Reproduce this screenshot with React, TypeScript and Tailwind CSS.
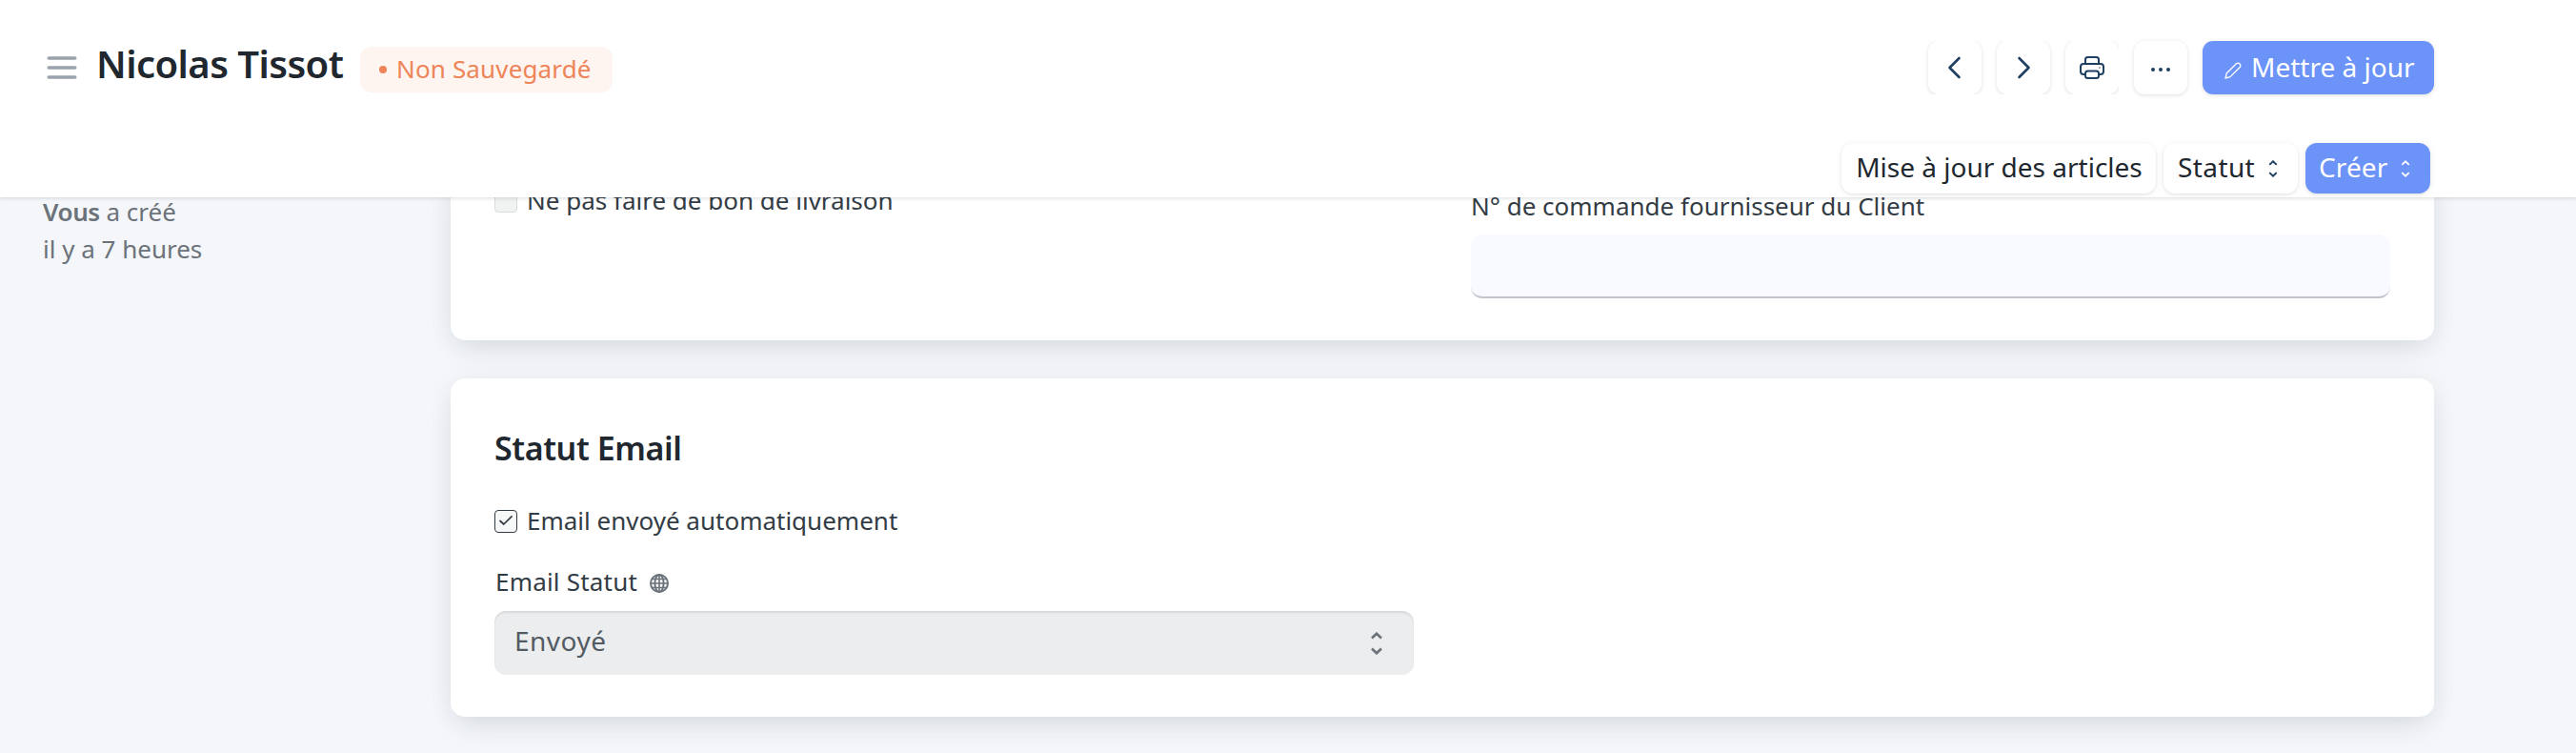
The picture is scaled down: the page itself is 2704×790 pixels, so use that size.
import type { ReactNode } from 'react';

const buttonShadow = 'shadow-[0_1px_3px_rgba(25,39,52,0.10),0_1px_8px_rgba(25,39,52,0.05)]';
const cardShadow = 'shadow-[0_14px_32px_-8px_rgba(25,45,50,0.11),0_2px_28px_rgba(25,39,60,0.055)]';

function UpDown({ className }: { className: string }) {
  return (
    <svg viewBox="0 0 12 24" fill="none" stroke="currentColor" className={className}>
      <path d="M1 6.5 6 1.7 11 6.5M1 17.5 6 22.3 11 17.5" />
    </svg>
  );
}

function IconButton({ children }: { children: ReactNode }) {
  return (
    <button className={`flex size-14 items-center justify-center rounded-[11px] bg-white text-[#1f3f63] ${buttonShadow}`}>
      {children}
    </button>
  );
}

function Header() {
  return (
    <header className="relative z-10 flex h-[207px] justify-between bg-white pr-[149px] pl-[49px] shadow-[0_1px_4px_rgba(25,39,52,0.16)]">
      <div className="flex h-[142px] items-center">
        <svg viewBox="0 0 32 24" className="h-6 w-8" stroke="#9aa3ad" strokeWidth="3.6" strokeLinecap="round">
          <path d="M2.3 2h27.4M2.3 12h27.4M2.3 22h27.4" />
        </svg>
        <h1 className="ml-[20px] w-[277px] pb-2 text-[40px] leading-[56px] font-semibold tracking-[-0.55px] whitespace-nowrap text-[#20272e]">Nicolas Tissot</h1>
        <div className="mt-1 flex h-12 w-[265px] items-center rounded-[12px] bg-[#fef4f0] pl-5 text-[#ed8558]">
          <span className="mr-[10px] size-2 rounded-full bg-[#ed8558]" />
          <span className="pb-0.5 text-[26px] leading-9 tracking-[0.15px] whitespace-nowrap">Non Sauvegardé</span>
        </div>
      </div>

      <div className="flex flex-col items-end">
        <div className="mt-[43px] flex h-14 gap-4">
          <div className="flex gap-4 [clip-path:inset(0_0_0_-8px)]">
            <IconButton>
              <svg viewBox="0 0 24 24" className="size-6" fill="none" stroke="currentColor" strokeWidth="2.6" strokeLinecap="round" strokeLinejoin="round"><path d="M16.500 2 6.500 12 16.500 22" /></svg>
            </IconButton>
            <IconButton>
              <svg viewBox="0 0 24 24" className="size-6" fill="none" stroke="currentColor" strokeWidth="2.6" strokeLinecap="round" strokeLinejoin="round"><path d="M7.500 2 17.500 12 7.500 22" /></svg>
            </IconButton>
            <IconButton>
              <svg viewBox="0 0 26 24" className="h-6 w-[26px]" fill="none" stroke="currentColor" strokeWidth="2" strokeLinejoin="round">
                <path d="M6 8V3.5Q6 1 8.500 1h9Q20 1 20 3.500V8M6 19H4Q1 19 1 16v-5Q1 8 4 8h18q3 0 3 3v5q0 3-3 3h-2" />
                <rect x="6" y="15.500" width="14" height="7.500" rx="2.500" />
                <path d="M20 12h1.800" strokeWidth="1.500" opacity=".6" />
              </svg>
            </IconButton>
          </div>
          <IconButton>
            <svg viewBox="0 0 22 6" className="mt-1 h-1.5 w-[22px]" fill="currentColor"><circle cx="3" cy="3" r="2" /><circle cx="11" cy="3" r="2" /><circle cx="19" cy="3" r="2" /></svg>
          </IconButton>
          <button className={`flex w-[243px] items-center rounded-[11px] bg-[#6c93f8] pl-[23px] text-white ${buttonShadow}`}>
            <svg viewBox="0 0 18 18" className="mt-1.5 mr-[10px] size-[18px]" fill="none" stroke="currentColor" strokeWidth="1.300" strokeLinejoin="round">
              <path d="M1 17 2.300 11.800 12.500 1.800Q14.200.400 16 2 17.500 3.800 16.200 5.500L6 15.600Z" />
            </svg>
            <span className="pb-0.5 text-[28px] leading-9 whitespace-nowrap">Mettre à jour</span>
          </button>
        </div>

        <div className="mt-[51px] mr-1 flex h-[53px] gap-2 text-[28px] leading-9 text-[#20272e]">
          <button className={`w-[330px] rounded-[12px] bg-white pb-1 pl-px whitespace-nowrap ${buttonShadow}`}>Mise à jour des articles</button>
          <button className={`flex w-[141px] items-center rounded-[12px] bg-white pl-[15px] ${buttonShadow}`}>
            <span className="w-[95px] pb-1 text-left tracking-[0.4px]">Statut</span>
            <UpDown className="h-[18px] w-[10px] stroke-[2.6] text-[#1f3f63]" />
          </button>
          <button className={`flex w-[131px] items-center rounded-[12px] bg-[#6c93f8] pl-[14px] text-white ${buttonShadow}`}>
            <span className="w-[86px] pb-1 text-left tracking-[0.1px]">Créer</span>
            <UpDown className="h-[18px] w-[10px] stroke-[2.4]" />
          </button>
        </div>
      </div>
    </header>
  );
}

export default function App() {
  return (
    <div className="h-[790px] overflow-hidden bg-[#f4f6fa] font-['Noto_Sans',sans-serif] text-[26px] leading-10 text-[#333c44]">
      <Header />
      <div className="-mt-[30px] flex">
        <aside className="w-[473px] pt-[26px] pl-[45px] leading-[39px] text-[#6b7279]">
          <p><span className="font-semibold tracking-[-0.4px]">Vous</span> a créé</p>
          <p>il y a 7 heures</p>
        </aside>

        <main className="flex w-[2082px] flex-col gap-10">
          <section className={`flex h-[180px] rounded-b-[15px] bg-white pr-[46px] pl-[46px] ${cardShadow}`}>
            <div className="flex h-10 flex-1 items-center pt-7">
              <span className="size-6 rounded-[4px] border border-[#d9dddd] bg-[#f1f3f3]" />
              <span className="ml-[10px] pb-[3px]">Ne pas faire de bon de livraison</span>
            </div>
            <div className="w-[965px] pt-[19px]">
              <div>N° de commande fournisseur du Client</div>
              <div className="mt-[10px] h-[67px] rounded-[12px] border-b-2 border-[#c0c6cc] bg-[#f8faff]" />
            </div>
          </section>

          <section className={`h-[355px] rounded-[15px] bg-white pt-[49px] pl-[46px] ${cardShadow}`}>
            <h2 className="text-[34px] leading-[48px] font-semibold tracking-[-0.4px] text-[#20272e]">Statut Email</h2>
            <div className="mt-[33px] flex h-10 items-center">
              <span className="flex size-6 justify-center rounded-[4px] border border-[#333c44] bg-[#f6f7f7] pt-[5px]">
                <svg viewBox="0 0 14 10" className="h-2.5 w-3.5" fill="none" stroke="#333c44" strokeWidth="1.700" strokeLinecap="round" strokeLinejoin="round"><path d="M1 5.500 4.800 9 13 .9" /></svg>
              </span>
              <span className="ml-[10px] pb-[3px]">Email envoyé automatiquement</span>
            </div>
            <div className="mt-[23px] flex h-10 items-center">
              <span className="ml-px tracking-[0.2px]">Email Statut</span>
              <svg viewBox="0 0 20 20" className="mt-1 ml-[13px] size-5" fill="none" stroke="#6b7279" strokeWidth="2">
                <circle cx="10" cy="10" r="9" /><ellipse cx="10" cy="10" rx="4.600" ry="9" /><path d="M10 1v18M1 10h18M2.600 5.500h14.800M2.600 14.500h14.800" strokeWidth="1.600" />
              </svg>
            </div>
            <div className="mt-[11px] flex h-[67px] w-[965px] items-center justify-between rounded-[12px] bg-[#ebedef] pr-[33px] pl-[21px] text-[28px] text-[#535b62] shadow-[inset_0_2px_2px_rgba(0,0,0,0.09)]">
              <span className="pb-1.5 tracking-[0.5px]">Envoyé</span>
              <UpDown className="h-6 w-3 stroke-[2.6] text-[#6b7279]" />
            </div>
          </section>
        </main>
      </div>
    </div>
  );
}
